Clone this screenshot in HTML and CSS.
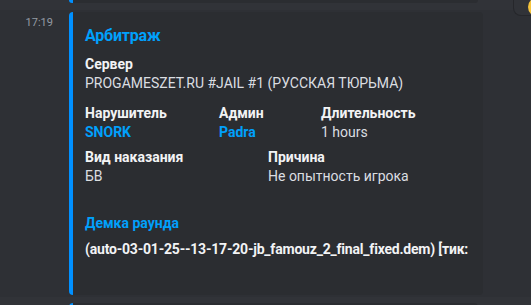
FILE: index.html
```html
<!doctype html>
<html lang="ru">
<head>
<meta charset="utf-8">
<title>Арбитраж</title>
<link rel="stylesheet" href="styles.css">
</head>
<body>

	<div class="prev">
		<div class="prevEmbed"></div>
	</div>

	<div class="msg">

		<div class="toolbar"><span class="emoji"></span></div>

		<span class="stamp">17:19</span>

		<div class="embed">

			<div class="title">Арбитраж</div>

			<div class="row">
				<div class="field">
					<div class="name">Сервер</div>
					<div class="value">PROGAMESZET.RU #JAIL #1 (РУССКАЯ ТЮРЬМА)</div>
				</div>
			</div>

			<div class="row three">
				<div class="field">
					<div class="name">Нарушитель</div>
					<div class="value link">SNORK</div>
				</div>
				<div class="field">
					<div class="name">Админ</div>
					<div class="value link">Padra</div>
				</div>
				<div class="field">
					<div class="name">Длительность</div>
					<div class="value">1 hours</div>
				</div>
			</div>

			<div class="row two">
				<div class="field">
					<div class="name">Вид наказания</div>
					<div class="value">БВ</div>
				</div>
				<div class="field">
					<div class="name">Причина</div>
					<div class="value">Не опытность игрока</div>
				</div>
			</div>

			<div class="demo">
				<div class="demoName">Демка раунда</div>
				<div class="demoValue">(auto-03-01-25--13-17-20-jb_famouz_2_final_fixed.dem) [тик:</div>
			</div>

		</div>

	</div>

	<div class="next">
		<div class="nextEmbed"></div>
	</div>

</body>
</html>
```

FILE: styles.css
```css
body { background: #313338; color: #dbdee1; font: 14px Roboto, "Noto Sans", sans-serif; height: 305px; margin: 0; overflow: hidden; }

.prev { height: 10px; }
.prevEmbed { background: #2b2d31; border-left: 4px solid #0090ff; border-radius: 0 0 4px 4px; height: 3px; margin-left: 69px; width: 405px; }

.msg { background: #2e3035; display: flex; padding: 2px 0; position: relative; }

.stamp { color: #949ba4; font-size: 11px; line-height: 14px; margin-top: 4px; text-align: right; width: 53px; margin-right: 16px; }

.embed { background: #2b2d31; border-left: 4px solid #0090ff; border-radius: 4px; box-sizing: border-box; height: 283px; padding: 13px 16px 16px 12px; width: 414px; }

.title { color: #00a0fc; font-size: 16px; font-weight: 700; letter-spacing: -0.2px; line-height: 22px; }

.row { display: grid; margin-top: 8px; }
.three { grid-template-columns: 134px 102px auto; margin-top: 12px; }
.two { grid-template-columns: 183px auto; margin-top: 7px; }

.name { color: #f2f3f5; font-weight: 700; line-height: 18px; margin-bottom: 1px; }
.value { line-height: 18px; white-space: nowrap; }
.link { color: #00a0fc; font-weight: 700; }

.demo { margin-top: 29px; }
.demoName { color: #00a0fc; font-weight: 700; line-height: 18px; margin-bottom: 8px; }
.demoValue { color: #f2f3f5; font-weight: 700; letter-spacing: -0.2px; line-height: 18px; white-space: nowrap; }

.toolbar { background: #313338; border: 1px solid #26272b; border-right: none; border-radius: 8px 0 0 8px; height: 34px; left: 513px; overflow: hidden; position: absolute; top: -30px; width: 18px; }
.emoji { background: #f7c53c; border-radius: 50%; height: 20px; left: 14px; position: absolute; top: 16px; width: 20px; }

.next { padding-top: 6px; }
.nextEmbed { background: #2b2d31; border-left: 4px solid #0090ff; border-radius: 4px 4px 0 0; height: 10px; margin-left: 69px; width: 405px; }
```
